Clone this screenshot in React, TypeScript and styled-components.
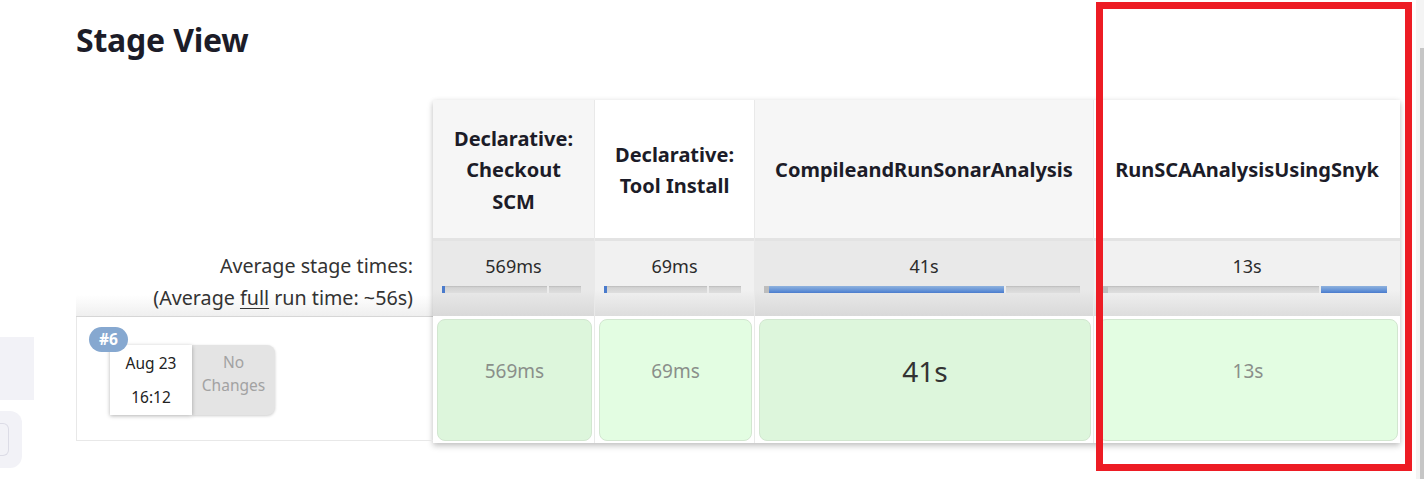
import React from "react";
import styled, { createGlobalStyle } from "styled-components";

const Global = createGlobalStyle`
  html, body { margin: 0; padding: 0; background: #fff; }
  body { font-family: "Noto Sans", "Open Sans", sans-serif; color: #1c1c24; overflow: hidden; }
  * { box-sizing: border-box; }
`;

const Page = styled.div`
  display: flex;
  width: 1424px;
  height: 479px;
  position: relative;
`;

const Sidebar = styled.div`
  width: 34px;
  padding-top: 337px;
  display: flex;
  flex-direction: column;
  gap: 11px;
`;

const SideBlock = styled.div`
  width: 34px;
  height: 63px;
  background: #f2f2f7;
`;

const SideButton = styled.div`
  width: 22px;
  height: 57px;
  background: #f2f2f7;
  border-radius: 0 12px 12px 0;
  padding-top: 12px;
`;

const SideButtonInner = styled.div`
  width: 9px;
  height: 33px;
  border: 1px solid #dcdce6;
  border-left: none;
  border-radius: 0 6px 6px 0;
`;

const Main = styled.main`
  margin-left: 42px;
  padding-top: 20px;
`;

const Title = styled.h2`
  margin: 0;
  font-size: 32px;
  line-height: 40px;
  font-weight: 700;
  color: #1c1c28;
  letter-spacing: -0.2px;
`;

const StageView = styled.div`
  display: flex;
  margin-top: 40px;
`;

const LabelColumn = styled.div`
  width: 357px;
  display: flex;
  flex-direction: column;
`;

const LabelHeader = styled.div`
  height: 141px;
`;

const AvgLabel = styled.div`
  height: 76px;
  padding: 9px 20px 0 0;
  text-align: right;
  font-size: 19.7px;
  line-height: 32px;
  color: #333;
  white-space: nowrap;
  background: linear-gradient(to bottom, #fff 0%, #fff 72%, #efefef 100%);
  border-bottom: 1px solid #d6d6d6;
`;

const Underlined = styled.span`
  text-decoration: underline;
  text-underline-offset: 3px;
`;

const BuildLabel = styled.div`
  height: 124px;
  border-left: 1px solid #e8e8e8;
  border-bottom: 1px solid #e8e8e8;
  padding: 10px 0 0 12px;
  position: relative;
`;

const BuildBadge = styled.span`
  position: absolute;
  left: 12px;
  top: 10px;
  z-index: 2;
  background: #86a8d0;
  color: #fff;
  font-weight: 700;
  font-size: 15.5px;
  line-height: 25px;
  height: 25px;
  padding: 0 10px;
  border-radius: 13px;
`;

const BuildCard = styled.div`
  display: flex;
  margin: 18px 0 0 21px;
  width: 165px;
  height: 70px;
`;

const DateBox = styled.div`
  width: 82px;
  background: #fff;
  box-shadow: 0 1px 4px rgba(0, 0, 0, 0.3);
  display: flex;
  flex-direction: column;
  align-items: center;
  justify-content: center;
  font-size: 15.5px;
  line-height: 34px;
  color: #222;
  position: relative;
  z-index: 1;
`;

const ChangesBox = styled.div`
  width: 83px;
  background: #e4e4e4;
  border-radius: 0 8px 8px 0;
  box-shadow: 0 1px 3px rgba(0, 0, 0, 0.2);
  display: flex;
  flex-direction: column;
  align-items: center;
  justify-content: flex-start;
  padding-top: 6px;
  font-size: 15.5px;
  line-height: 23px;
  color: #a2a2a2;
`;

const Table = styled.div`
  display: flex;
  box-shadow: 0 3px 6px rgba(0, 0, 0, 0.22), 0 0 5px rgba(0, 0, 0, 0.06);
  background: #fff;
`;

const Column = styled.div<{ $w: number }>`
  width: ${(p) => p.$w}px;
  display: flex;
  flex-direction: column;
  & + & { border-left: 1px solid #e9e9e9; }
`;

const HeadCell = styled.div<{ $alt: boolean }>`
  height: 141px;
  background: ${(p) => (p.$alt ? "#f6f6f6" : "#ffffff")};
  display: flex;
  align-items: center;
  justify-content: center;
  text-align: center;
  font-weight: 700;
  font-size: 20px;
  line-height: 31.5px;
  color: #1c1c28;
  padding: 2px 10px 0;
  border-bottom: 3px solid #e3e3e3;
`;

const AvgCell = styled.div<{ $alt: boolean }>`
  height: 75px;
  background: ${(p) =>
    p.$alt
      ? "linear-gradient(to bottom, #e9e9e9 0%, #e9e9e9 65%, #d9d9d9 100%)"
      : "linear-gradient(to bottom, #f1f1f1 0%, #f1f1f1 65%, #dddddd 100%)"};
  display: flex;
  flex-direction: column;
  align-items: center;
  padding: 11px 0 0;
`;

const AvgTime = styled.div`
  font-size: 18px;
  line-height: 28px;
  color: #2b2b2b;
`;

const Track = styled.div`
  align-self: stretch;
  margin: 6px 13px 0 9px;
  height: 7px;
  display: flex;
  background: linear-gradient(to bottom, #cfcfcf, #dedede);
  box-shadow: inset 0 1px 1px rgba(0, 0, 0, 0.08);
`;

const Segment = styled.div<{ $grow: number; $fill: boolean }>`
  flex: ${(p) => p.$grow} 1 0;
  background: ${(p) =>
    p.$fill ? "linear-gradient(to bottom, #8fb2dd, #5f8fd6 70%, #4a7bcc)" : "transparent"};
  & + & { border-left: 2px solid #ececec; }
`;

const Lead = styled.div<{ $blue: boolean }>`
  width: ${(p) => (p.$blue ? 3 : 5)}px;
  background: ${(p) => (p.$blue ? "#4a7bcc" : "#bdbdbd")};
`;

const BuildCellWrap = styled.div`
  height: 127px;
  padding: 3px 2px 2px 4px;
  background: #fff;
`;

const BuildCell = styled.div<{ $alt: boolean }>`
  height: 100%;
  background: ${(p) => (p.$alt ? "#ddf6dc" : "#e3fde2")};
  border: 1px solid #d2e6d0;
  border-radius: 8px;
  display: flex;
  align-items: center;
  justify-content: center;
  padding-bottom: 18px;
`;

const Duration = styled.span<{ $big: boolean }>`
  font-size: ${(p) => (p.$big ? 28 : 19)}px;
  color: ${(p) => (p.$big ? "#333" : "#8a8f8a")};
`;

const Highlight = styled.div`
  position: absolute;
  left: 1096px;
  top: 2px;
  width: 316px;
  height: 469px;
  border: 7px solid #ed1c24;
  pointer-events: none;
`;

const ScrollTrack = styled.div`
  position: absolute;
  right: 0;
  top: 0;
  width: 8px;
  height: 479px;
  background: #f4f4f4;
  padding: 48px 0 0 4px;
`;

const ScrollThumb = styled.div`
  height: 100%;
  background: #c6c6c6;
`;

type Stage = {
  name: React.ReactNode;
  width: number;
  avg: string;
  fill: "none" | "first" | "second";
  lead: "blue" | "gray";
  dur: string;
  big?: boolean;
};

const stages: Stage[] = [
  { name: <>Declarative:<br />Checkout<br />SCM</>, width: 161, avg: "569ms", fill: "none", lead: "blue", dur: "569ms" },
  { name: <>Declarative:<br />Tool Install</>, width: 160, avg: "69ms", fill: "none", lead: "blue", dur: "69ms" },
  { name: "CompileandRunSonarAnalysis", width: 339, avg: "41s", fill: "first", lead: "gray", dur: "41s", big: true },
  { name: "RunSCAAnalysisUsingSnyk", width: 307, avg: "13s", fill: "second", lead: "gray", dur: "13s" },
];

export default function App() {
  return (
    <>
      <Global />
      <Page>
        <Sidebar>
          <SideBlock />
          <SideButton>
            <SideButtonInner />
          </SideButton>
        </Sidebar>
        <Main>
          <Title>Stage View</Title>
          <StageView>
            <LabelColumn>
              <LabelHeader />
              <AvgLabel>
                Average stage times:
                <br />
                (Average <Underlined>full</Underlined> run time: ~56s)
              </AvgLabel>
              <BuildLabel>
                <BuildBadge>#6</BuildBadge>
                <BuildCard>
                  <DateBox>
                    <span>Aug 23</span>
                    <span>16:12</span>
                  </DateBox>
                  <ChangesBox>
                    <span>No</span>
                    <span>Changes</span>
                  </ChangesBox>
                </BuildCard>
              </BuildLabel>
            </LabelColumn>
            <Table>
              {stages.map((s, i) => (
                <Column key={i} $w={s.width}>
                  <HeadCell $alt={i % 2 === 0}>{s.name}</HeadCell>
                  <AvgCell $alt={i % 2 === 0}>
                    <AvgTime>{s.avg}</AvgTime>
                    <Track>
                      <Lead $blue={s.lead === "blue"} />
                      <Segment $grow={76} $fill={s.fill === "first"} />
                      <Segment $grow={24} $fill={s.fill === "second"} />
                    </Track>
                  </AvgCell>
                  <BuildCellWrap>
                    <BuildCell $alt={i % 2 === 0}>
                      <Duration $big={!!s.big}>{s.dur}</Duration>
                    </BuildCell>
                  </BuildCellWrap>
                </Column>
              ))}
            </Table>
          </StageView>
        </Main>
        <Highlight />
        <ScrollTrack>
          <ScrollThumb />
        </ScrollTrack>
      </Page>
    </>
  );
}
